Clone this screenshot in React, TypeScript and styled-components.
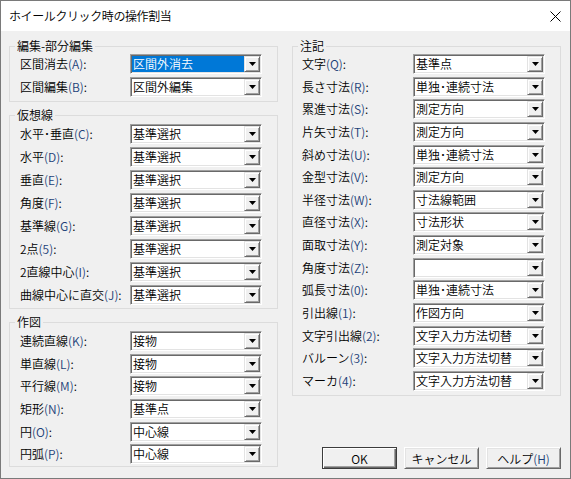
import React from 'react';
import styled, { createGlobalStyle, css } from 'styled-components';

const GlobalStyle = createGlobalStyle`
  html, body { margin: 0; padding: 0; background: #f0f0f0; }
  body { font-family: "Noto Sans CJK JP", "Noto Sans", sans-serif; font-size: 12px; font-weight: 350; color: #000; }
  #root { width: 571px; height: 479px; }
  * { box-sizing: border-box; }
`;

const Window = styled.div`
  width: 571px;
  height: 479px;
  border: 1px solid #7a7a7a;
  display: flex;
  flex-direction: column;
  background: #f0f0f0;
`;

const TitleBar = styled.div`
  height: 30px;
  flex: none;
  background: #fff;
  display: flex;
  align-items: center;
  padding-left: 8px;
`;

const Title = styled.span`
  flex: 1;
  font-size: 12px;
  line-height: 14px;
  letter-spacing: -0.4px;
`;

const CloseButton = styled.div`
  width: 30px;
  height: 30px;
  display: flex;
  align-items: center;
  justify-content: center;
`;

const Body = styled.div`
  flex: 1;
  min-height: 0;
  display: grid;
  grid-template-columns: 269px 269px;
  column-gap: 14px;
  padding: 8px 9px 9px 8px;
`;

const Column = styled.div`
  display: flex;
  flex-direction: column;
  gap: 6px;
  min-height: 0;
`;

const Group = styled.fieldset<{ $padLeft: number; $padTop: number; $padBottom: number }>`
  margin: 0;
  min-width: 0;
  border: 1px solid #dcdcdc;
  padding: ${p => p.$padTop}px 15px ${p => p.$padBottom}px ${p => p.$padLeft}px;
`;

const Legend = styled.legend<{ $shift: number }>`
  font-size: 12px;
  line-height: 14px;
  padding: 0 2px;
  margin-left: ${p => p.$shift}px;
`;

const Rows = styled.div<{ $gap: number }>`
  display: flex;
  flex-direction: column;
  gap: ${p => p.$gap}px;
`;

const Row = styled.div<{ $labelW: number }>`
  display: grid;
  grid-template-columns: ${p => p.$labelW}px 132px;
  align-items: center;
  height: 20px;
`;

const Label = styled.span`
  font-size: 12px;
  line-height: 14px;
  white-space: nowrap;
`;

const Key = styled.span`
  color: #1c3f78;
`;

const Combo = styled.div`
  width: 132px;
  height: 20px;
  display: flex;
  padding: 1px;
  background: #fff;
  border-top: 1px solid #a0a0a0;
  border-left: 1px solid #a0a0a0;
  border-right: 1px solid #fff;
  border-bottom: 1px solid #fff;
  box-shadow: inset 1px 1px 0 #696969, inset -1px -1px 0 #e3e3e3;
`;

const Field = styled.div<{ $selected?: boolean }>`
  flex: 1;
  min-width: 0;
  height: 16px;
  padding-left: 1px;
  line-height: 16px;
  font-size: 12px;
  white-space: nowrap;
  overflow: hidden;
  ${p =>
    p.$selected &&
    css`
      background: #0078d7;
      color: #fff;
    `}
`;

const DropButton = styled.div`
  width: 16px;
  height: 16px;
  flex: none;
  display: flex;
  align-items: center;
  justify-content: center;
  background: #f0f0f0;
  border-top: 1px solid #e3e3e3;
  border-left: 1px solid #e3e3e3;
  border-right: 1px solid #696969;
  border-bottom: 1px solid #696969;
  box-shadow: inset 1px 1px 0 #fff, inset -1px -1px 0 #a0a0a0;
`;

const ButtonBar = styled.div`
  margin-top: auto;
  display: flex;
  justify-content: flex-end;
  gap: 7px;
`;

const Button = styled.div<{ $default?: boolean }>`
  width: 75px;
  height: 22px;
  display: flex;
  align-items: center;
  justify-content: center;
  font-size: 12px;
  background: #f0f0f0;
  border-top: 1px solid #fff;
  border-left: 1px solid #fff;
  border-right: 1px solid #696969;
  border-bottom: 1px solid #696969;
  box-shadow: inset 1px 1px 0 #e3e3e3, inset -1px -1px 0 #a0a0a0;
  ${p =>
    p.$default &&
    css`
      border: 1px solid #3c3c3c;
      box-shadow: inset 1px 1px 0 #fff, inset -1px -1px 0 #696969, inset -2px -2px 0 #a0a0a0;
    `}
`;

const Arrow = () => (
  <svg width="7" height="4" viewBox="0 0 7 4">
    <polygon points="0,0 7,0 3.5,4" fill="#000" />
  </svg>
);

type Item = { label: string; key: string; value: string; selected?: boolean };

const split = (s: string) => {
  const m = s.match(/^(.*?)(\(.+\))$/);
  return m ? [m[1], m[2]] : [s, ''];
};

const ComboRow: React.FC<{ item: Item; labelW: number }> = ({ item, labelW }) => (
  <Row $labelW={labelW}>
    <Label>
      {item.label}
      <Key>({item.key})</Key>:
    </Label>
    <Combo>
      <Field $selected={item.selected}>{item.value}</Field>
      <DropButton>
        <Arrow />
      </DropButton>
    </Combo>
  </Row>
);

const mk = (arr: [string, string, string][]): Item[] =>
  arr.map(([label, key, value]) => ({ label, key, value }));

const edit: Item[] = [
  { label: '区間消去', key: 'A', value: '区間外消去', selected: true },
  { label: '区間編集', key: 'B', value: '区間外編集' },
];

const virtual = mk([
  ['水平･垂直', 'C', '基準選択'],
  ['水平', 'D', '基準選択'],
  ['垂直', 'E', '基準選択'],
  ['角度', 'F', '基準選択'],
  ['基準線', 'G', '基準選択'],
  ['2点', '5', '基準選択'],
  ['2直線中心', 'I', '基準選択'],
  ['曲線中心に直交', 'J', '基準選択'],
]);

const draw = mk([
  ['連続直線', 'K', '接物'],
  ['単直線', 'L', '接物'],
  ['平行線', 'M', '接物'],
  ['矩形', 'N', '基準点'],
  ['円', 'O', '中心線'],
  ['円弧', 'P', '中心線'],
]);

const notes = mk([
  ['文字', 'Q', '基準点'],
  ['長さ寸法', 'R', '単独･連続寸法'],
  ['累進寸法', 'S', '測定方向'],
  ['片矢寸法', 'T', '測定方向'],
  ['斜め寸法', 'U', '単独･連続寸法'],
  ['金型寸法', 'V', '測定方向'],
  ['半径寸法', 'W', '寸法線範囲'],
  ['直径寸法', 'X', '寸法形状'],
  ['面取寸法', 'Y', '測定対象'],
  ['角度寸法', 'Z', ''],
  ['弧長寸法', '0', '単独･連続寸法'],
  ['引出線', '1', '作図方向'],
  ['文字引出線', '2', '文字入力方法切替'],
  ['バルーン', '3', '文字入力方法切替'],
  ['マーカ', '4', '文字入力方法切替'],
]);

export default function App() {
  const [h, hk] = split('ヘルプ(H)');
  return (
    <>
      <GlobalStyle />
      <Window>
        <TitleBar>
          <Title>ホイールクリック時の操作割当</Title>
          <CloseButton>
            <svg width="11" height="11" viewBox="0 0 11 11">
              <path d="M0.5 0.5 L10.5 10.5 M10.5 0.5 L0.5 10.5" stroke="#000" strokeWidth="1" />
            </svg>
          </CloseButton>
        </TitleBar>
        <Body>
          <Column>
            <Group $padLeft={10} $padTop={1} $padBottom={4}>
              <Legend $shift={-5}>編集-部分編集</Legend>
              <Rows $gap={3}>
                {edit.map(it => (
                  <ComboRow key={it.key} item={it} labelW={110} />
                ))}
              </Rows>
            </Group>
            <Group $padLeft={10} $padTop={2} $padBottom={3}>
              <Legend $shift={-5}>仮想線</Legend>
              <Rows $gap={3}>
                {virtual.map(it => (
                  <ComboRow key={it.key} item={it} labelW={110} />
                ))}
              </Rows>
            </Group>
            <Group $padLeft={10} $padTop={2} $padBottom={2}>
              <Legend $shift={-5}>作図</Legend>
              <Rows $gap={2.63}>
                {draw.map(it => (
                  <ComboRow key={it.key} item={it} labelW={110} />
                ))}
              </Rows>
            </Group>
          </Column>
          <Column>
            <Group $padLeft={9} $padTop={1} $padBottom={4}>
              <Legend $shift={-4}>注記</Legend>
              <Rows $gap={2.63}>
                {notes.map(it => (
                  <ComboRow key={it.key} item={it} labelW={111} />
                ))}
              </Rows>
            </Group>
            <ButtonBar>
              <Button $default>OK</Button>
              <Button>キャンセル</Button>
              <Button>
                {h}
                <Key>{hk}</Key>
              </Button>
            </ButtonBar>
          </Column>
        </Body>
      </Window>
    </>
  );
}
